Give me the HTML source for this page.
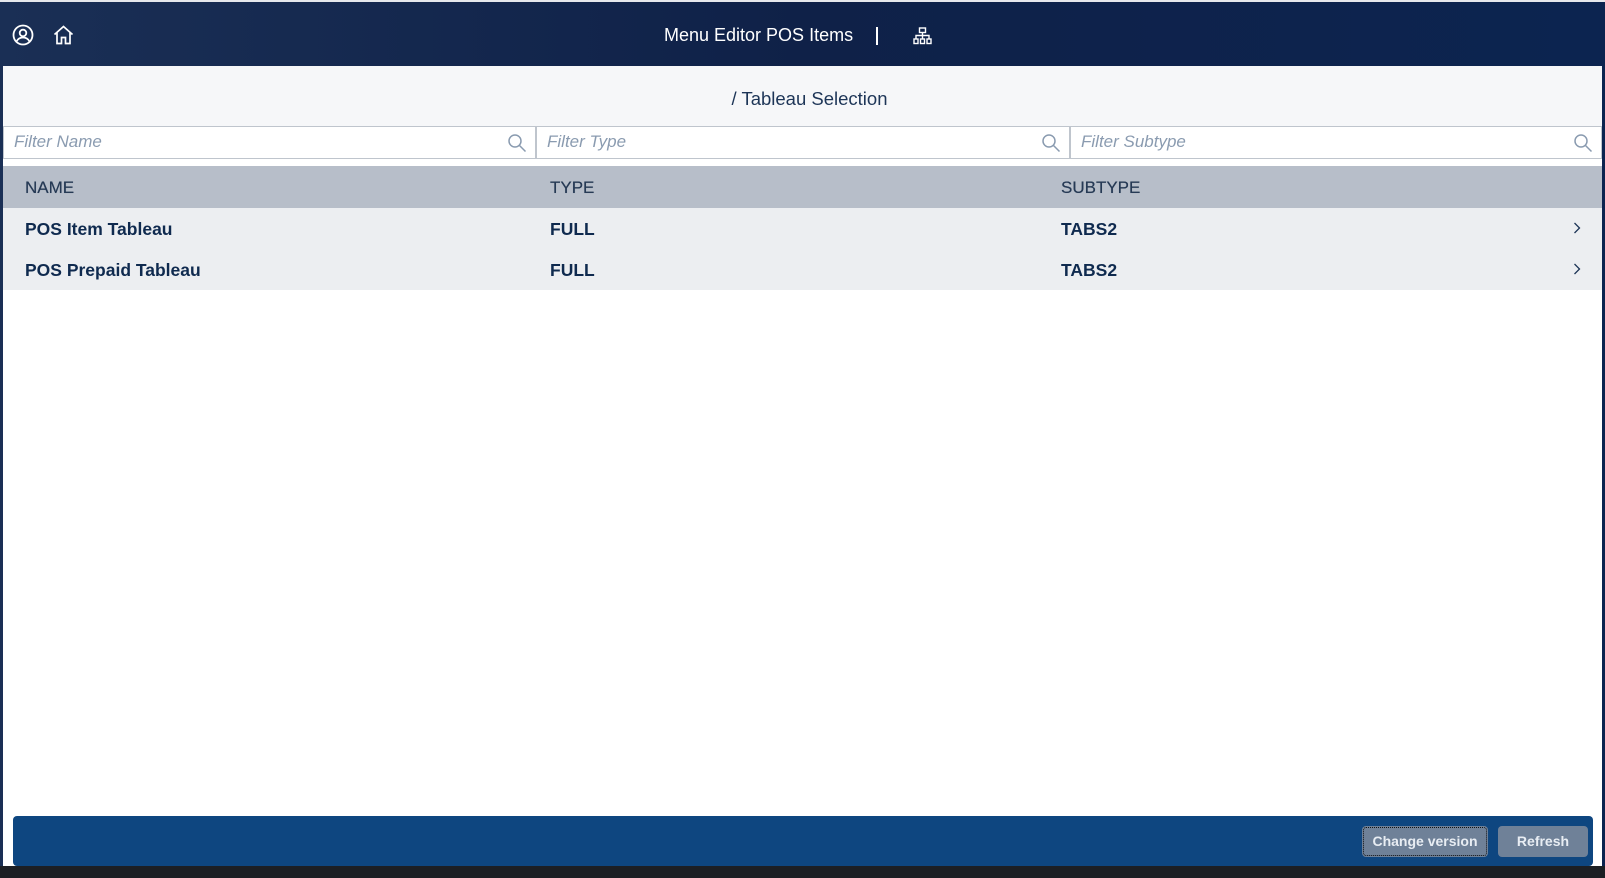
<!DOCTYPE html>
<html><head><style>
*{box-sizing:border-box;margin:0;padding:0}
body{width:1605px;height:878px;overflow:hidden;background:linear-gradient(90deg,#1a2f55,#0f2148 50%,#0c2450);font-family:"Liberation Sans",sans-serif;position:relative}
.hdr{position:absolute;left:0;top:0;width:1605px;height:66px;border-top:2px solid #e6e8ec}
.panel{position:absolute;left:3px;top:66px;width:1599px;height:812px;background:#fff}
.bc{height:60px;background:#f6f7f9;text-align:center;font-size:18.5px;color:#1d3557;line-height:66px;padding-left:14px}
.filters{position:absolute;top:60px;left:0;width:1599px;height:33px}
.f{position:absolute;top:0;height:33px;border:1.5px solid #bfc5cd;background:#fff;font-style:italic;color:#8a9bb0;font-size:17px;line-height:30px;padding-left:10px}
.f svg{position:absolute;right:8px;top:6px}
.th{position:absolute;top:100px;left:0;width:1599px;height:42px;background:#b7bec9;color:#263a55;font-size:17px;line-height:44px;text-shadow:0 0 0.4px #263a55}
.row{position:absolute;left:0;width:1599px;height:41px;background:#eceef1;color:#0f2a4f;font-size:17.5px;font-weight:bold;line-height:43px}
.c1{position:absolute;left:22px}.c2{position:absolute;left:547px}.c3{position:absolute;left:1058px}
.chev{position:absolute;left:1570px;top:14px}
.foot{position:absolute;left:10px;top:750px;width:1580px;height:50px;background:#0e4680;border-radius:4px}
.btn{position:absolute;top:10px;height:31px;background:#6f8198;border-radius:4px;color:#e8edf3;font-size:14px;font-weight:bold;text-align:center;line-height:31px}
</style></head><body>
<div class="hdr">
<svg style="position:absolute;left:12px;top:22px" width="22" height="22" viewBox="0 0 22 22" fill="none" stroke="#fff" stroke-width="1.8"><circle cx="11" cy="11" r="9.5"/><circle cx="11" cy="9" r="3.3"/><path d="M4.5 17.5c1.5-3 3.8-4 6.5-4s5 1 6.5 4"/></svg>
<svg style="position:absolute;left:53px;top:23px" width="21" height="20" viewBox="0 0 21 20" fill="none" stroke="#fff" stroke-width="1.7"><path d="M1.5 9.5L10.5 1.5l9 8M4 7.5V18.5h4.5v-6h4v6H17V7.5"/></svg>
<div style="position:absolute;left:664px;top:23px;color:#fff;font-size:18px">Menu Editor POS Items</div>
<div style="position:absolute;left:876px;top:25px;width:2px;height:18px;background:#fff"></div>
<svg style="position:absolute;left:913px;top:25px" width="19" height="18" viewBox="0 0 19 18" fill="none" stroke="#fff" stroke-width="1.4"><rect x="6.5" y="1" width="6" height="4.5"/><path d="M9.5 5.5v3M3 12V8.5h13V12M9.5 8.5V12"/><rect x="1" y="12" width="4" height="4.5"/><rect x="7.5" y="12" width="4" height="4.5"/><rect x="14" y="12" width="4" height="4.5"/></svg>
</div>
<div class="panel">
<div class="bc">/ Tableau Selection</div>
<div class="filters">
<div class="f" style="left:0;width:533px">Filter Name<svg width="20" height="20" viewBox="0 0 20 20" fill="none" stroke="#8a9bb0" stroke-width="1.5"><circle cx="8" cy="8" r="6"/><path d="M12.5 12.5l6 6"/></svg></div>
<div class="f" style="left:533px;width:534px">Filter Type<svg width="20" height="20" viewBox="0 0 20 20" fill="none" stroke="#8a9bb0" stroke-width="1.5"><circle cx="8" cy="8" r="6"/><path d="M12.5 12.5l6 6"/></svg></div>
<div class="f" style="left:1067px;width:532px">Filter Subtype<svg width="20" height="20" viewBox="0 0 20 20" fill="none" stroke="#8a9bb0" stroke-width="1.5"><circle cx="8" cy="8" r="6"/><path d="M12.5 12.5l6 6"/></svg></div>
</div>
<div class="th"><span class="c1">NAME</span><span class="c2">TYPE</span><span class="c3">SUBTYPE</span></div>
<div class="row" style="top:142px"><span class="c1">POS Item Tableau</span><span class="c2">FULL</span><span class="c3">TABS2</span><svg class="chev" width="8" height="12" viewBox="0 0 8 12" fill="none" stroke="#1d3557" stroke-width="1.3"><path d="M1.5 1l5 5-5 5"/></svg></div>
<div class="row" style="top:183px"><span class="c1">POS Prepaid Tableau</span><span class="c2">FULL</span><span class="c3">TABS2</span><svg class="chev" width="8" height="12" viewBox="0 0 8 12" fill="none" stroke="#1d3557" stroke-width="1.3"><path d="M1.5 1l5 5-5 5"/></svg></div>
<div class="foot">
<div class="btn" style="left:1349px;width:126px;outline:1px dotted #111;outline-offset:-2px">Change version</div>
<div class="btn" style="left:1485px;width:90px">Refresh</div>
</div>
</div>
<div style="position:absolute;left:0;top:866px;width:1605px;height:12px;background:#1c1f24"></div>
</body></html>
